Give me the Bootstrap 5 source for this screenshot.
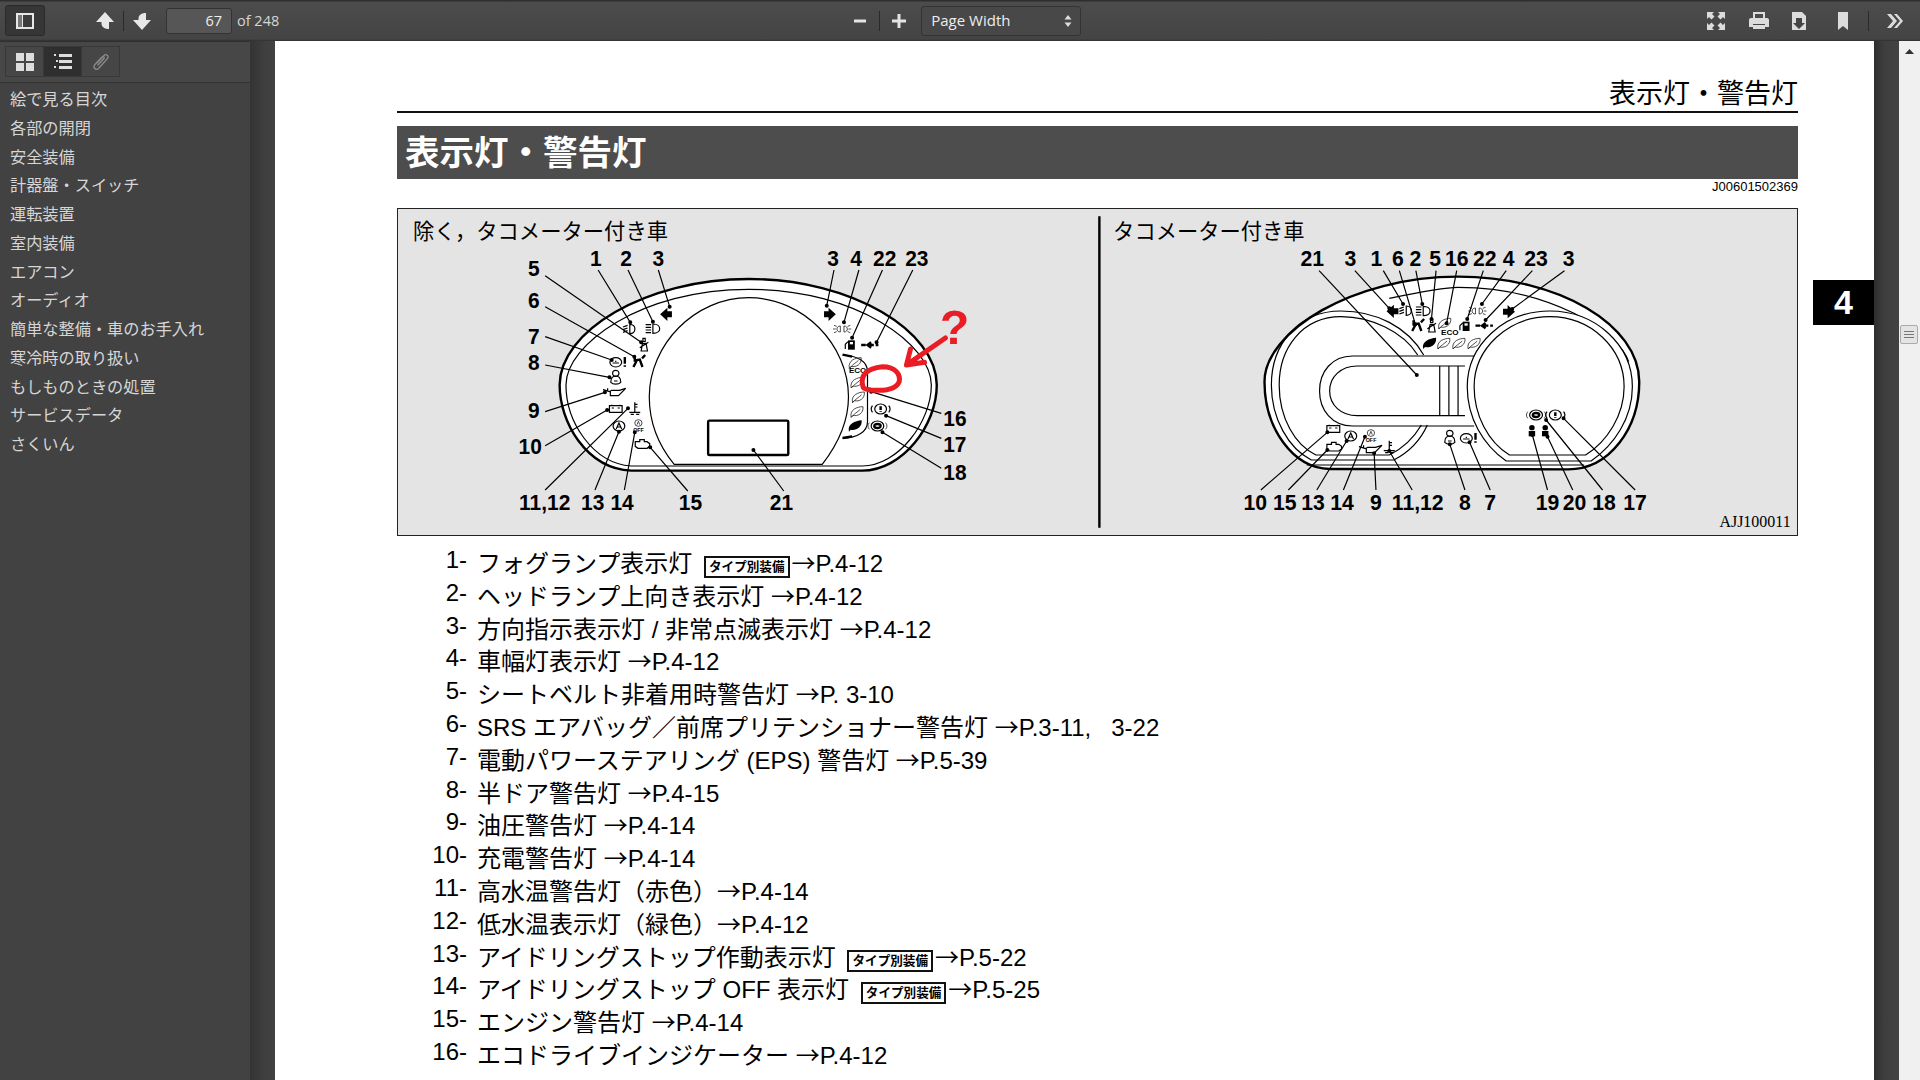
<!DOCTYPE html>
<html lang="ja">
<head>
    <meta charset="UTF-8">
    <title>表示灯・警告灯</title>
    <link href="https://cdn.jsdelivr.net/npm/bootstrap@5.3.0/dist/css/bootstrap.min.css" rel="stylesheet">
    <style>
        html, body { height: 100%; overflow: hidden; }
        body { font-family: "Liberation Sans", "Noto Sans CJK JP", sans-serif; background: #3d3d3d; }
        .tool-bar { height: 41px; flex: none; background: linear-gradient(#2e2e2e 0, #2e2e2e 1px, #4c4c4c 2px, #444 39px, #2f2f2f 41px); color: #ddd; font-family: "Open Sans", "Liberation Sans", sans-serif; }
        .tool-bar svg { display: block; flex: none; }
        .tool-toggle { position: relative; width: 40px; height: 31px; margin: 5px 50px 0 5px; border: 1px solid #2a2a2a; border-radius: 3px; background: #363636; display: flex; align-items: center; justify-content: center; }
        .tool-sep { width: 1px; height: 20px; background: #2a2a2a; flex: none; }
        .tool-sep-wide { margin: 0 11px; }
        .page-num { width: 66px; height: 26px; margin-left: 14px; padding: 0 9px 0 0; background: #565656; border: 1px solid #333; border-radius: 3px; color: #eee; font-size: 14.5px; text-align: right; line-height: 24px; box-shadow: none; }
        .page-num:focus { background: #565656; color: #eee; border-color: #333; box-shadow: none; }
        .page-of { margin-left: 5px; font-size: 14.5px; color: #d5d5d5; }
        .zoom-tools { margin-left: 573px; }
        .zoom-box { width: 160px; height: 30px; margin-left: 14px; padding: 0 8px 0 9px; background: #484848; border: 1px solid #333; border-radius: 3px; font-size: 15px; color: #eee; }
        .act-print { margin-left: 22px; }
        .act-save { margin-left: 20px; }
        .act-mark { margin-left: 28px; }
        .act-sep { margin-left: 18px; }
        .act-more { margin: 0 15px 0 16px; }
        .side-pane { width: 250px; flex: none; background: #424242; border-top: 1px solid #2f2f2f; }
        .side-tabs { height: 41px; padding: 4px 5px 0; background: #474747; border-bottom: 1px solid #333; }
        .side-tab { width: 39px; height: 31px; display: flex; align-items: center; justify-content: center; border: 1px solid #383838; background: #464646; margin-right: -1px; }
        .side-tab.is-on { background: #2f2f2f; }
        .side-list { padding-top: 2px; background: transparent; }
        .side-list .list-group-item { background: transparent; border: 0; padding: 0 0 0 10px; height: 28.75px; line-height: 28.75px; font-size: 16.2px; color: #d6d6d6; }
        .view-gutter { width: 25px; flex: none; background: linear-gradient(90deg, #333, #3f3f3f 60%, #424242); }
        .view-gutter-right { background: linear-gradient(90deg, #2e2e2e, #3e3e3e 40%, #424242); }
        .paper { position: relative; width: 1599px; flex: none; background: #fff; color: #000; padding: 0 76px 0 122px; overflow: hidden; }
        .paper-head { height: 72px; padding-bottom: 0; border-bottom: 2px solid #111; font-size: 27px; line-height: 33px; text-align: right; display: flex; align-items: flex-end; justify-content: flex-end; }
        .paper-title { margin-top: 13px; height: 53px; padding-left: 8px; background: #4d4d4d; color: #fff; font-size: 34.5px; font-weight: 700; line-height: 55px; }
        .paper-code { height: 29px; font-size: 13px; line-height: 16px; text-align: right; }
        .fig-box { height: 328px; background: #e4e4e4; border: 1.5px solid #222; display: flex; }
        .fig-pane { display: block; height: 100%; width: 50%; }
        .ln { fill: none; stroke: #000; stroke-width: 1.2px; vector-effect: non-scaling-stroke; }
        .ln-bold { stroke-width: 2.4px; }
        .ln-thin { stroke: #222; stroke-width: .8px; }
        .dots { fill: none; stroke: #000; stroke-width: 4px; stroke-linecap: round; vector-effect: non-scaling-stroke; }
        .fill-k { fill: #000; }
        .fill-w { fill: #fff; }
        .red-ln { fill: none; stroke: #ea1c24; stroke-width: 5px; stroke-linecap: round; stroke-linejoin: round; vector-effect: non-scaling-stroke; }
        .red-mark { fill: #ea1c24; font-family: "Liberation Sans", sans-serif; font-weight: 700; font-size: 145px; text-anchor: middle; transform-box: fill-box; transform-origin: center; transform: scaleX(.736); }
        .num { font-family: "Liberation Sans", sans-serif; font-weight: 700; font-size: 66px; text-anchor: middle; transform-box: fill-box; transform-origin: center; transform: scaleX(.70); }
        .tiny { font-family: "Liberation Sans", sans-serif; font-weight: 700; font-size: 24px; text-anchor: middle; transform-box: fill-box; transform-origin: center; transform: scaleX(.736); }
        .tiny-off { font-size: 16px; }
        .cap { font-family: "Noto Sans CJK JP", sans-serif; font-size: 64px; transform-box: fill-box; transform-origin: left center; transform: scaleX(.736); }
        .cap-r { transform: scaleX(.725); }
        .fig-no { font-family: "Liberation Serif", serif; font-size: 48px; text-anchor: end; transform-box: fill-box; transform-origin: right center; transform: scaleX(.725); }
        .spec-list { margin: 9px 0 0; padding: 0; list-style: none; }
        .spec-row { height: 32.8px; display: flex; font-size: 24px; line-height: 33px; white-space: nowrap; }
        .spec-no { width: 70px; margin-right: 10px; text-align: right; position: relative; top: -2px; flex: none; }
        .type-tag { display: inline-block; height: 22px; padding: 0 3px; margin: 0 2px 0 5px; border: 2px solid #111; font-size: 12.6px; font-weight: 700; line-height: 18px; vertical-align: 1px; }
        .arw { font-family: "Noto Sans CJK JP", sans-serif; }
        .chap-tab { position: absolute; right: 0; top: 239px; width: 61px; height: 45px; background: #000; color: #fff; font-size: 34px; font-weight: 700; line-height: 45px; text-align: center; }
        .scroll-rail { width: 21px; flex: none; background: #f0f0f0; position: relative; }
        .scroll-up { position: absolute; left: 6px; top: 8px; }
        .scroll-thumb { position: absolute; left: 1px; top: 284px; width: 18px; height: 19px; border: 1px solid #aaa; border-radius: 2px; background: #e4e4e4; display: flex; flex-direction: column; justify-content: center; align-items: center; gap: 2px; }
        .scroll-thumb span { width: 10px; height: 1px; background: #777; }
    </style>
</head>
<body class="d-flex flex-column">

<div class="tool-bar d-flex align-items-center">
    <div class="tool-toggle align-self-start">
        <svg width="20" height="18" viewBox="0 0 20 18"><rect x="1" y="1" width="18" height="16" fill="#e6e6e6"/><rect x="3" y="3" width="4" height="12" fill="#777"/><rect x="8" y="3" width="9" height="12" fill="#3c3c3c"/></svg>
    </div>
    <svg width="20" height="20" viewBox="0 0 20 20"><path d="M10 1 19 11H14V18C11 18 7 17 6.500 13V11H1Z" fill="#e8e8e8"/></svg>
    <div class="tool-sep mx-2"></div>
    <svg width="20" height="20" viewBox="0 0 20 20"><path d="M10 19 19 9H14V2C11 2 7 3 6.500 7V9H1Z" fill="#e8e8e8"/></svg>
    <input class="form-control page-num" value="67" aria-label="page">
    <span class="page-of">of 248</span>

    <div class="d-flex align-items-center zoom-tools">
        <svg width="16" height="16" viewBox="0 0 16 16"><rect x="2" y="6.500" width="12" height="3" fill="#e4e4e4"/></svg>
        <div class="tool-sep tool-sep-wide"></div>
        <svg width="16" height="16" viewBox="0 0 16 16"><path d="M1 6.500H6.500V1H9.500V6.500H15V9.500H9.500V15H6.500V9.500H1Z" fill="#e4e4e4"/></svg>
        <div class="zoom-box d-flex align-items-center justify-content-between">
            <span>Page Width</span>
            <svg width="8" height="12" viewBox="0 0 8 12"><path d="M4 0 7.500 4.500H.5ZM4 12 .5 7.500H7.500Z" fill="#ddd"/></svg>
        </div>
    </div>

    <div class="d-flex align-items-center ms-auto">
        <svg width="20" height="20" viewBox="0 0 20 20" fill="#dcdcdc"><path d="M1 1H8L6 3 8.500 5.500 5.500 8.500 3 6 1 8ZM19 1V8L17 6 14.500 8.500 11.500 5.500 14 3 12 1ZM1 19V12L3 14 5.500 11.500 8.500 14.500 6 17 8 19ZM19 19H12L14 17 11.500 14.500 14.500 11.500 17 14 19 12Z"/></svg>
        <svg class="act-print" width="22" height="20" viewBox="0 0 22 20"><path d="M5 1H17V7H19C20.500 7 21 8 21 9V16H17V13H5V16H1V9C1 8 1.500 7 3 7H5Z" fill="#dcdcdc"/><rect x="7" y="3" width="8" height="4" fill="#4a4a4a"/><rect x="5" y="14" width="12" height="4" fill="#dcdcdc"/></svg>
        <svg class="act-save" width="18" height="20" viewBox="0 0 18 20"><path d="M2 1H12L16 5V19H2Z" fill="#dcdcdc"/><path d="M6 7H12V12H15L9 18 3 12H6Z" fill="#444"/></svg>
        <svg class="act-mark" width="14" height="20" viewBox="0 0 14 20"><path d="M2 1H12V19L7 15 2 19Z" fill="#dcdcdc"/></svg>
        <div class="tool-sep act-sep"></div>
        <svg class="act-more" width="20" height="18" viewBox="0 0 20 18"><path d="M2 2H6L12 9 6 16H2L8 9ZM9 2H12L18 9 12 16H9L15 9Z" fill="#dcdcdc"/></svg>
    </div>
</div>

<div class="d-flex flex-grow-1 overflow-hidden">
    <aside class="side-pane">
        <div class="side-tabs d-flex">
            <div class="side-tab"><svg width="18" height="18" viewBox="0 0 18 18" fill="#ddd"><rect width="8" height="8"/><rect x="10" width="8" height="8"/><rect y="10" width="8" height="8"/><rect x="10" y="10" width="8" height="8"/></svg></div>
            <div class="side-tab is-on"><svg width="18" height="16" viewBox="0 0 18 16" fill="#ddd"><rect x="5" y="0" width="13" height="3"/><rect x="5" y="6" width="13" height="3"/><rect x="5" y="12" width="13" height="3"/><rect x="0" y="0" width="2" height="2"/><rect x="2" y="6" width="2" height="2"/><rect x="0" y="12" width="2" height="2"/></svg></div>
            <div class="side-tab"><svg width="20" height="20" viewBox="0 0 20 20" fill="none" stroke="#8a8a8a" stroke-width="1.300"><path d="M6 11 13 3.500C15 1.500 18.500 4 16.500 6.500L7.500 16.500C5.500 18.500 1.500 16 3.500 13L11 5C12 4 14 5 13 6.500L6.500 13.500"/></svg></div>
        </div>
        <div class="list-group list-group-flush side-list">
            <div class="list-group-item">絵で見る目次</div>
            <div class="list-group-item">各部の開閉</div>
            <div class="list-group-item">安全装備</div>
            <div class="list-group-item">計器盤・スイッチ</div>
            <div class="list-group-item">運転装置</div>
            <div class="list-group-item">室内装備</div>
            <div class="list-group-item">エアコン</div>
            <div class="list-group-item">オーディオ</div>
            <div class="list-group-item">簡単な整備・車のお手入れ</div>
            <div class="list-group-item">寒冷時の取り扱い</div>
            <div class="list-group-item">もしものときの処置</div>
            <div class="list-group-item">サービスデータ</div>
            <div class="list-group-item">さくいん</div>
        </div>
    </aside>
    <div class="view-gutter"></div>

    <main class="paper">
        <div class="paper-head">表示灯・警告灯</div>
        <div class="paper-title">表示灯・警告灯</div>
        <div class="paper-code">J00601502369</div>

        <div class="fig-box">
            <svg width="0" height="0" class="position-absolute">
                <defs>
                    <path id="ic-fog" class="ln" d="M-3 -14C12 -14 12 14 -3 14ZM-8 -11-18 -6M-8 -3-18 2M-8 5-18 10"/>
                    <path id="ic-head" class="ln" d="M0 -14C20 -14 20 14 0 14ZM-16 -12H-4M-16 -4H-4M-16 4H-4M-16 12H-4"/>
                    <path id="ic-left" class="fill-k" d="M-14 0 2 -20V-9H12V9H2V20Z"/>
                    <path id="ic-right" class="fill-k" d="M14 0-2 -20V-9H-12V9H-2V20Z"/>
                    <path id="ic-side" class="ln ln-thin" d="M-4 -9C-14 -9 -14 9 -4 9ZM4 -9C14 -9 14 9 4 9ZM-12 -8-18 -11M-14 0H-20M-12 8-18 11M12 -8 18 -11M14 0H20M12 8 18 11"/>
                    <path id="ic-belt" class="ln" d="M-6 16-3 -6H5L8 16ZM-2 -22H3V-12H-2ZM-9 6 10 -10"/>
                    <path id="ic-bag" class="ln ln-bold" d="M-8 -16V-4L3 -6 9 16M-3 -5-11 16M8 -10 15 -20"/>
                    <g id="ic-eps"><ellipse class="ln" cx="-8" cy="2" rx="13" ry="14"/><path class="ln" d="M-15 4H-1M-8 -3V1"/><path class="ln ln-bold" d="M12 -14V6M12 11V15"/></g>
                    <g id="ic-door"><ellipse class="ln" cx="0" cy="-13" rx="7" ry="9"/><path class="ln" d="M-11 14C-11 0 -6 -5 0 -5 6 -5 11 0 11 14 6 21 -6 21 -11 14ZM-4 10H4"/></g>
                    <path id="ic-oil" class="ln" d="M-24 -8-10 -2-5 -6H12L26 -12 10 10H-8V-2ZM-14 -12V-4"/>
                    <g id="ic-bat"><rect class="ln" x="-14" y="-10" width="28" height="20"/><path class="ln" d="M-9 -13V-10M9 -13V-10M-9 -3H-4M4 -3H9"/></g>
                    <path id="ic-temp" class="ln" d="M0 -20V8M0 -14H6M0 -6H6M-12 10H12M-9 16H-2M3 16H10"/>
                    <g id="ic-a"><ellipse class="ln" cx="0" cy="0" rx="13" ry="15"/><path class="ln" d="M-6 9 0 -9 6 9M-3 3H3"/></g>
                    <g id="ic-aoff"><ellipse class="ln ln-thin" cx="0" cy="-10" rx="8" ry="10"/><path class="ln ln-thin" d="M-3 -5 0 -15 3 -5"/><text class="tiny tiny-off" x="0" y="16">OFF</text></g>
                    <path id="ic-eng" class="ln" d="M-14 -8H-4V-14H6V-8H12L18 -2V6L12 12H-8L-14 6Z"/>
                    <path id="ic-leaf" class="ln ln-thin" d="M-14 16C-18 -8 0 -16 12 -16 14 4 0 14 -10 10ZM-14 16C-8 6 0 0 6 -8"/>
                    <path id="ic-leaf-k" class="fill-k" d="M-14 16C-18 -8 0 -16 14 -18 16 4 0 14 -10 10Z"/>
                    <g id="ic-warn"><ellipse class="ln" cx="0" cy="0" rx="13" ry="15"/><path class="ln" d="M-18 -10C-22 -3 -22 3 -18 10M18 -10C22 -3 22 3 18 10"/><path class="ln ln-bold" d="M0 -8V3M0 7V9"/></g>
                    <g id="ic-abs"><ellipse class="ln" cx="0" cy="0" rx="14" ry="15"/><path class="ln ln-thin" d="M-18 -10C-22 -3 -22 3 -18 10M18 -10C22 -3 22 3 18 10"/><ellipse class="ln ln-bold" cx="0" cy="0" rx="7" ry="6"/></g>
                    <g id="ic-fuel"><path class="fill-k" d="M-8 -14H7V14H-8Z"/><rect class="fill-w" x="-4" y="-9" width="7" height="7"/><path class="ln" d="M-14 12V-2L-8 -10"/></g>
                    <path id="ic-cruise" class="ln ln-bold" d="M-18 0H-8M14 0H20M4 -8-4 0 4 8M-2 0H10"/>
                    <g id="ic-man"><ellipse class="fill-k" cx="0" cy="-10" rx="6" ry="8"/><path class="fill-k" d="M-7 0H7V16H-7Z"/></g>
                </defs>
            </svg>

            <svg class="fig-pane" viewBox="15 12 1545 978" preserveAspectRatio="none">
                <text class="cap" x="48" y="103">除く，タコメーター付き車</text>
                <path class="ln ln-bold fill-w" d="M530 797C430 790 372 650 372 540 372 380 560 222 790 222 1020 222 1205 380 1205 540 1205 660 1130 797 1040 797Z"/>
                <path class="ln" d="M530 783C445 775 386 650 386 540 386 420 550 253 790 253 1030 253 1193 420 1193 540 1193 650 1120 783 1040 783Z"/>
                <path class="ln" d="M625 778C590 720 570 650 570 575 570 420 670 278 790 278 910 278 1010 420 1010 575 1010 650 985 720 952 778Z"/>
                <rect class="ln ln-bold" x="700" y="647" width="177" height="103" rx="3"/>
                <path class="ln" d="M997 450C1030 452 1052 470 1052 500V650C1052 680 1030 698 997 700"/>
                <path class="ln ln-bold" d="M997 449 1018 455M997 699 1018 694"/>

                <use href="#ic-fog" x="530" y="372"/><use href="#ic-head" x="578" y="371"/>
                <use href="#ic-left" x="608" y="328"/><use href="#ic-right" x="968" y="328"/>
                <use href="#ic-side" x="996" y="372"/><use href="#ic-fuel" x="1017" y="420"/>
                <use href="#ic-cruise" x="1056" y="420"/><use href="#ic-belt" x="558" y="422"/>
                <use href="#ic-bag" x="546" y="470"/><use href="#ic-eps" x="504" y="470"/>
                <use href="#ic-door" x="496" y="518"/><use href="#ic-oil" x="492" y="562"/>
                <use href="#ic-bat" x="496" y="612"/><use href="#ic-temp" x="538" y="612"/>
                <use href="#ic-a" x="503" y="663"/><use href="#ic-aoff" x="546" y="664"/>
                <use href="#ic-eng" x="553" y="718"/>
                <use href="#ic-leaf" x="1026" y="474"/><text class="tiny" x="1030" y="503">ECO</text>
                <use href="#ic-leaf" x="1030" y="533"/>
                <use href="#ic-leaf" x="1033" y="577"/><use href="#ic-leaf" x="1030" y="621"/>
                <use href="#ic-leaf-k" x="1025" y="664"/><use href="#ic-warn" x="1081" y="612"/>
                <use href="#ic-abs" x="1074" y="663"/>

                <path class="ln" d="M457 195 528 352M523 195 578 350M590 195 615 305M978 195 962 302M1033 195 1000 352M1085 195 1018 398M1152 195 1072 412M340 212 552 412M340 305 537 455M340 395 487 465M340 480 482 517M340 620 472 562M340 722 477 615M340 855 523 610M450 855 503 680M515 855 538 682M655 858 572 727M867 858 800 735M1215 625 1060 560M1215 700 1093 632M1215 790 1085 682"/>
                <path class="dots" d="M528 352h0M578 350h0M615 305h0M962 302h0M1000 352h0M1018 398h0M1072 412h0M552 412h0M537 455h0M487 465h0M482 517h0M472 562h0M477 615h0M523 610h0M503 680h0M538 682h0M572 727h0M800 735h0M1060 560h0M1093 632h0M1085 682h0"/>

                <g>
                    <text class="num" x="452" y="182">1</text><text class="num" x="519" y="182">2</text><text class="num" x="590" y="182">3</text>
                    <text class="num" x="976" y="182">3</text><text class="num" x="1027" y="182">4</text><text class="num" x="1090" y="182">22</text><text class="num" x="1161" y="182">23</text>
                    <text class="num" x="315" y="213">5</text><text class="num" x="315" y="310">6</text><text class="num" x="315" y="418">7</text><text class="num" x="315" y="495">8</text>
                    <text class="num" x="315" y="640">9</text><text class="num" x="307" y="748">10</text>
                    <text class="num" x="339" y="915">11,12</text><text class="num" x="445" y="915">13</text><text class="num" x="510" y="915">14</text><text class="num" x="661" y="915">15</text><text class="num" x="862" y="915">21</text>
                    <text class="num" x="1245" y="663">16</text><text class="num" x="1245" y="740">17</text><text class="num" x="1245" y="826">18</text>
                </g>

                <path class="red-ln" d="M1042 545C1035 510 1050 490 1085 485 1115 485 1125 510 1122 530 1115 555 1085 558 1060 555 1048 553 1042 550 1042 545Z"/>
                <path class="red-ln" d="M1224 399 1140 478M1147 432 1138 480 1178 472"/>
                <text class="red-mark" x="1244" y="418">?</text>
            </svg>

            <svg class="fig-pane" viewBox="15 12 1525 978" preserveAspectRatio="none">
                <path class="ln ln-bold" d="M18 34V968"/>
                <text class="cap cap-r" x="48" y="103">タコメーター付き車</text>
                <path class="ln ln-bold fill-w" d="M520 792C440 790 378 670 378 530 378 380 570 215 800 215 1020 215 1195 360 1195 530 1195 670 1130 793 1040 793Z"/>
                <path class="ln" d="M470 780H1075M650 280C720 260 770 247 800 247 1000 247 1150 380 1172 470"/>
                <path class="ln" d="M725 450C690 365 620 318 545 318 450 318 393 420 393 540 393 640 430 730 480 765H660C695 740 720 700 733 660"/>
                <path class="ln" d="M712 450C680 380 610 335 545 335 460 335 410 430 410 540 410 640 445 720 490 750H650C680 730 705 695 720 660"/>
                <path class="ln" d="M835 453H570C525 453 498 500 498 558 498 615 525 663 570 663H835"/>
                <path class="ln" d="M815 483H580C545 483 520 515 520 558 520 600 545 632 580 632H815M760 483V632M780 483V632M800 483V632"/>
                <path class="ln fill-w" d="M905 768C855 720 820 640 820 545 820 420 900 318 1000 318 1100 318 1180 420 1180 545 1180 640 1140 720 1090 768Z"/>
                <path class="ln" d="M912 750C865 710 835 630 835 545 835 430 910 335 1000 335 1090 335 1162 430 1162 545 1162 630 1125 710 1078 750Z"/>

                <use href="#ic-left" x="658" y="319"/><use href="#ic-fog" x="690" y="317"/><use href="#ic-head" x="724" y="318"/>
                <use href="#ic-side" x="842" y="318"/><use href="#ic-right" x="910" y="320"/>
                <use href="#ic-bag" x="711" y="362"/><use href="#ic-belt" x="742" y="365"/>
                <use href="#ic-leaf" x="772" y="356"/><text class="tiny" x="782" y="390">ECO</text><use href="#ic-fuel" x="818" y="364"/><use href="#ic-cruise" x="856" y="362"/>
                <use href="#ic-leaf-k" x="738" y="416"/><use href="#ic-leaf" x="770" y="416"/><use href="#ic-leaf" x="803" y="416"/><use href="#ic-leaf" x="836" y="416"/>
                <use href="#ic-abs" x="970" y="630"/><use href="#ic-warn" x="1012" y="630"/>
                <use href="#ic-man" x="961" y="678"/><use href="#ic-man" x="990" y="678"/>
                <use href="#ic-bat" x="528" y="672"/><use href="#ic-a" x="566" y="693"/><use href="#ic-aoff" x="610" y="694"/>
                <use href="#ic-eng" x="528" y="726"/><use href="#ic-oil" x="608" y="733"/><use href="#ic-temp" x="650" y="727"/>
                <use href="#ic-door" x="782" y="698"/><use href="#ic-eps" x="826" y="698"/>

                <path class="ln" d="M497 197 710 510M575 197 650 310M637 197 680 297M672 197 707 358M708 197 722 297M752 197 742 342M797 197 775 355M855 197 820 342M905 197 852 297M962 197 860 345M1032 197 918 312M370 855 515 682M430 855 515 735M492 855 557 708M550 855 597 695M621 855 617 745M700 855 650 738M815 855 782 718M870 855 825 712M995 855 962 690M1050 855 995 695M1115 855 992 645M1186 855 1030 640"/>
                <path class="dots" d="M710 510h0M650 310h0M680 297h0M707 358h0M722 297h0M742 342h0M775 355h0M820 342h0M852 297h0M860 345h0M918 312h0M515 682h0M515 735h0M557 708h0M597 695h0M617 745h0M650 738h0M782 718h0M825 712h0M962 690h0M995 695h0M992 645h0M1030 640h0"/>

                <g>
                    <text class="num" x="482" y="183">21</text><text class="num" x="565" y="183">3</text><text class="num" x="622" y="183">1</text><text class="num" x="669" y="183">6</text><text class="num" x="707" y="183">2</text><text class="num" x="750" y="183">5</text><text class="num" x="797" y="183">16</text><text class="num" x="858" y="183">22</text><text class="num" x="910" y="183">4</text><text class="num" x="970" y="183">23</text><text class="num" x="1041" y="183">3</text>
                    <text class="num" x="358" y="915">10</text><text class="num" x="422" y="915">15</text><text class="num" x="484" y="915">13</text><text class="num" x="547" y="915">14</text><text class="num" x="621" y="915">9</text><text class="num" x="712" y="915">11,12</text><text class="num" x="815" y="915">8</text><text class="num" x="870" y="915">7</text><text class="num" x="995" y="915">19</text><text class="num" x="1054" y="915">20</text><text class="num" x="1118" y="915">18</text><text class="num" x="1186" y="915">17</text>
                </g>
                <text class="fig-no" x="1525" y="966">AJJ100011</text>
            </svg>
        </div>

        <ul class="spec-list">
            <li class="spec-row"><span class="spec-no">1-</span><span>フォグランプ表示灯 <span class="type-tag">タイプ別装備</span><span class="arw">→</span>P.4-12</span></li>
            <li class="spec-row"><span class="spec-no">2-</span><span>ヘッドランプ上向き表示灯 <span class="arw">→</span>P.4-12</span></li>
            <li class="spec-row"><span class="spec-no">3-</span><span>方向指示表示灯 / 非常点滅表示灯 <span class="arw">→</span>P.4-12</span></li>
            <li class="spec-row"><span class="spec-no">4-</span><span>車幅灯表示灯 <span class="arw">→</span>P.4-12</span></li>
            <li class="spec-row"><span class="spec-no">5-</span><span>シートベルト非着用時警告灯 <span class="arw">→</span>P. 3-10</span></li>
            <li class="spec-row"><span class="spec-no">6-</span><span>SRS エアバッグ／前席プリテンショナー警告灯 <span class="arw">→</span>P.3-11,&nbsp;&nbsp;&nbsp;3-22</span></li>
            <li class="spec-row"><span class="spec-no">7-</span><span>電動パワーステアリング (EPS) 警告灯 <span class="arw">→</span>P.5-39</span></li>
            <li class="spec-row"><span class="spec-no">8-</span><span>半ドア警告灯 <span class="arw">→</span>P.4-15</span></li>
            <li class="spec-row"><span class="spec-no">9-</span><span>油圧警告灯 <span class="arw">→</span>P.4-14</span></li>
            <li class="spec-row"><span class="spec-no">10-</span><span>充電警告灯 <span class="arw">→</span>P.4-14</span></li>
            <li class="spec-row"><span class="spec-no">11-</span><span>高水温警告灯（赤色）<span class="arw">→</span>P.4-14</span></li>
            <li class="spec-row"><span class="spec-no">12-</span><span>低水温表示灯（緑色）<span class="arw">→</span>P.4-12</span></li>
            <li class="spec-row"><span class="spec-no">13-</span><span>アイドリングストップ作動表示灯 <span class="type-tag">タイプ別装備</span><span class="arw">→</span>P.5-22</span></li>
            <li class="spec-row"><span class="spec-no">14-</span><span>アイドリングストップ OFF 表示灯 <span class="type-tag">タイプ別装備</span><span class="arw">→</span>P.5-25</span></li>
            <li class="spec-row"><span class="spec-no">15-</span><span>エンジン警告灯 <span class="arw">→</span>P.4-14</span></li>
            <li class="spec-row"><span class="spec-no">16-</span><span>エコドライブインジケーター <span class="arw">→</span>P.4-12</span></li>
        </ul>

        <div class="chap-tab">4</div>
    </main>

    <div class="view-gutter view-gutter-right"></div>
    <div class="scroll-rail">
        <svg class="scroll-up" width="9" height="5" viewBox="0 0 9 5"><path d="M4.500 0 9 5H0Z" fill="#333"/></svg>
        <div class="scroll-thumb"><span></span><span></span><span></span></div>
    </div>
</div>

<script src="https://cdn.jsdelivr.net/npm/bootstrap@5.3.0/dist/js/bootstrap.bundle.min.js"></script>
</body>
</html>
